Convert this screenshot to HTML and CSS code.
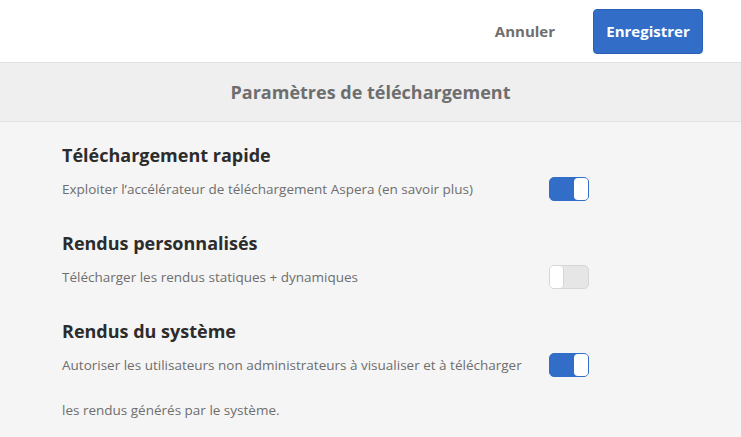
FILE: index.html
```html
<!DOCTYPE html>
<html lang="fr">
<head>
<meta charset="utf-8">
<link rel="stylesheet" href="styles.css">
</head>
<body>
<header class="topbar">
  <button class="btn-cancel">Annuler</button>
  <button class="btn-save">Enregistrer</button>
</header>
<div class="titlebar">Paramètres de téléchargement</div>
<main class="content">
  <section class="group">
    <h2>Téléchargement rapide</h2>
    <div class="row">
      <p>Exploiter l’accélérateur de téléchargement Aspera (en savoir plus)</p>
      <span class="toggle on"><span class="knob"></span></span>
    </div>
  </section>
  <section class="group">
    <h2>Rendus personnalisés</h2>
    <div class="row">
      <p>Télécharger les rendus statiques + dynamiques</p>
      <span class="toggle off"><span class="knob"></span></span>
    </div>
  </section>
  <section class="group">
    <h2>Rendus du système</h2>
    <div class="row">
      <p>Autoriser les utilisateurs non administrateurs à visualiser et à télécharger</p>
      <span class="toggle on"><span class="knob"></span></span>
    </div>
    <p class="extra">les rendus générés par le système.</p>
  </section>
</main>
</body>
</html>
```
FILE: styles.css
```css
* { box-sizing: border-box; }
html, body { margin: 0; padding: 0; }
body {
  width: 741px;
  height: 437px;
  overflow: hidden;
  background: #f5f5f5;
  font-family: "Open Sans", "Liberation Sans", sans-serif;
}
.topbar {
  height: 63px;
  background: #fff;
  border-bottom: 1px solid #e1e1e1;
  display: flex;
  align-items: center;
  justify-content: flex-end;
  padding-right: 38px;
  gap: 38px;
}
button { font-family: inherit; cursor: pointer; }
.btn-cancel {
  background: none;
  border: none;
  color: #6e6e6e;
  font-size: 15px;
  font-weight: 700;
  padding: 0;
}
.btn-save {
  background: #326ec8;
  border: 1px solid #2b61b5;
  border-radius: 4px;
  color: #fff;
  font-size: 15px;
  font-weight: 700;
  height: 45px;
  width: 110px;
  padding: 0;
}
.titlebar {
  height: 59px;
  background: #efefef;
  border-bottom: 1px solid #e1e1e1;
  display: flex;
  align-items: center;
  justify-content: center;
  color: #6e6e6e;
  font-size: 18px;
  font-weight: 700;
}
.content {
  padding: 20px 0 0 62px;
}
.group { margin-bottom: 29px; }
h2 {
  margin: 0;
  font-size: 18px;
  font-weight: 700;
  color: #2c2c2c;
  line-height: 26px;
}
.row {
  display: flex;
  align-items: center;
  width: 527px;
  justify-content: space-between;
  margin-top: 9px;
}
p {
  margin: 0;
  font-size: 13.5px;
  color: #6e6e6e;
  line-height: 24px;
}
.extra { margin-top: 21px; }
.toggle {
  width: 40px;
  height: 24px;
  border-radius: 5px;
  display: flex;
  padding: 0;
}
.toggle .knob {
  width: 14px;
  height: 22px;
  background: #fff;
  border-radius: 4px;
}
.toggle.on { background: #326ec8; justify-content: flex-end; border: 1px solid #326ec8; }
.toggle.off { background: #e6e6e6; border: 1px solid #d6d6d6; }
.toggle.off .knob { border-right: 1px solid #d6d6d6; }
```
